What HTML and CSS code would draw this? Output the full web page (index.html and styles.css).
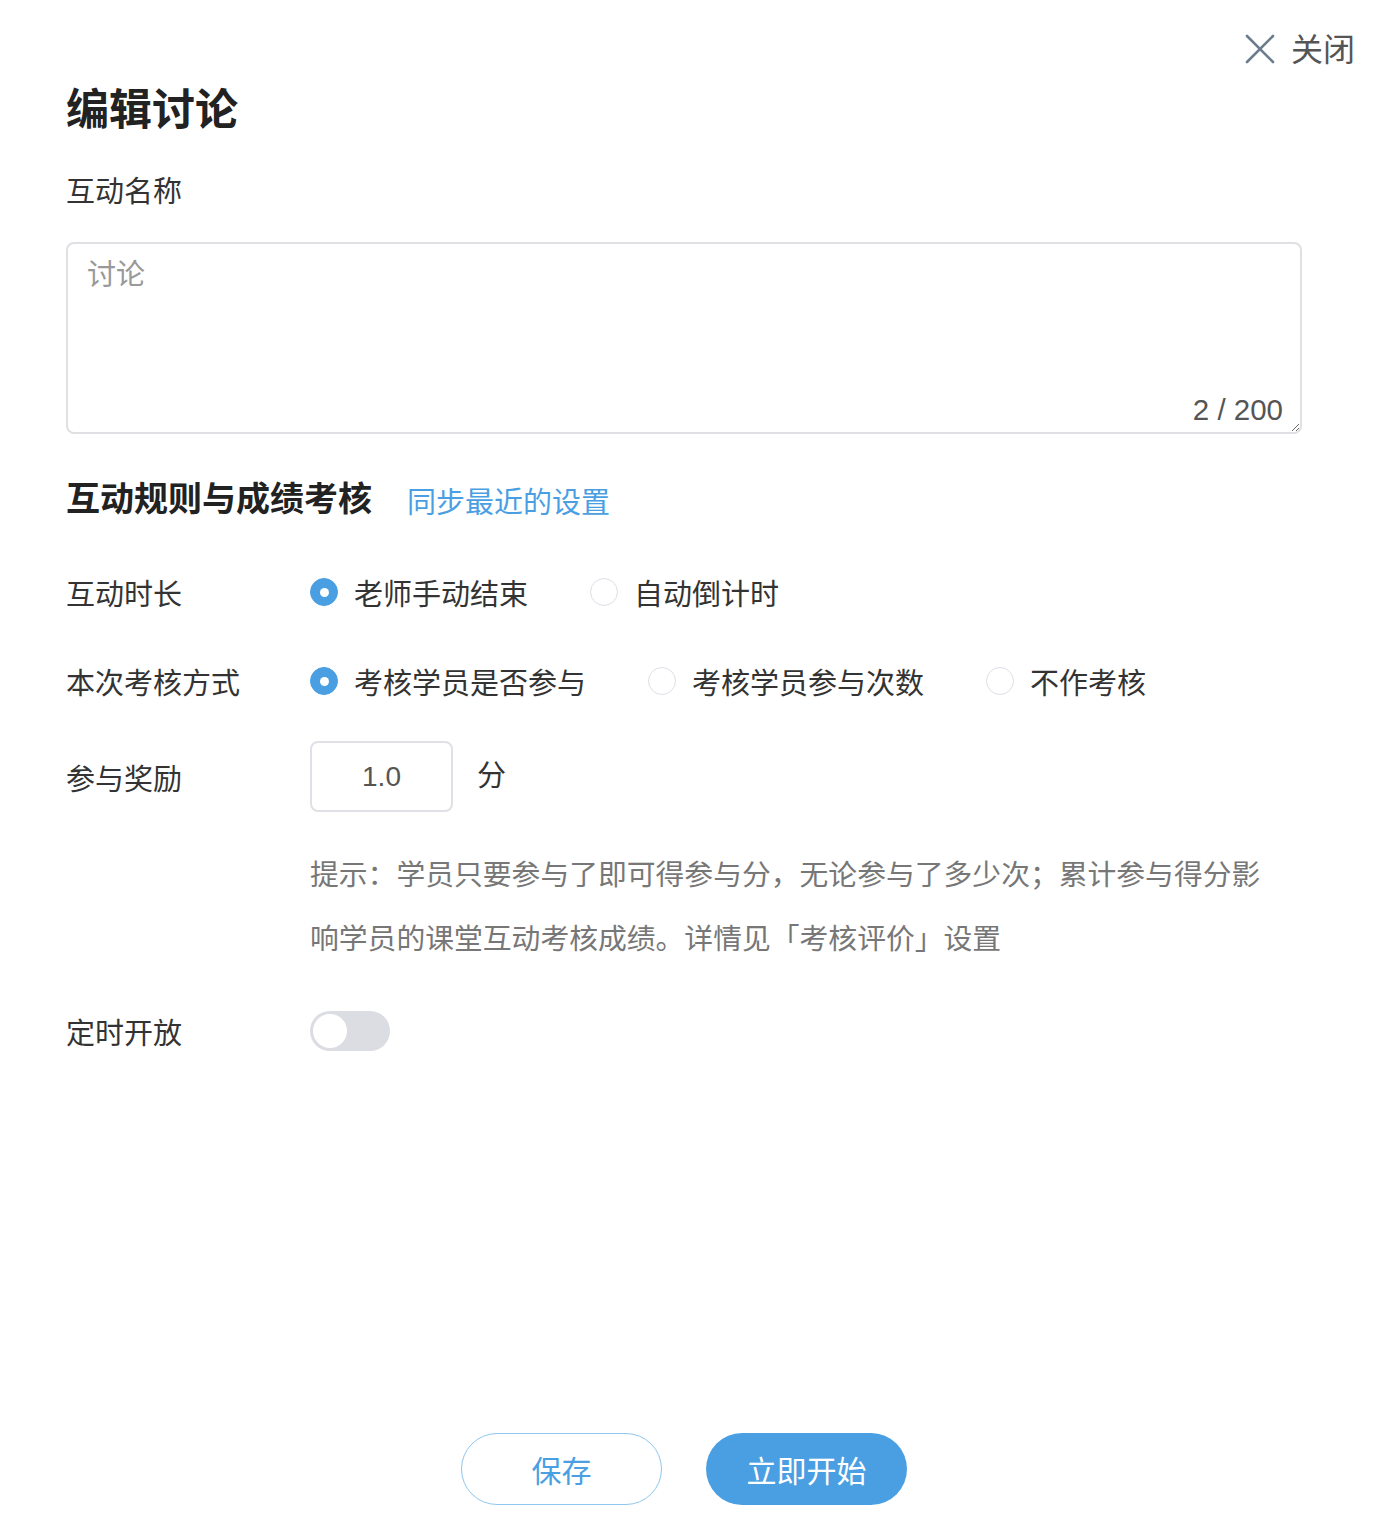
FILE: index.html
```html
<!DOCTYPE html>
<html lang="zh-CN">
<head>
    <meta charset="UTF-8">
    <meta name="viewport" content="width=device-width, initial-scale=1.0">
    <title>编辑讨论</title>
    <link rel="stylesheet" href="styles.css">
</head>
<body>

    <div class="dialog">
        <button class="close-btn" type="button">
            <svg class="close-icon" viewBox="0 0 30 30" width="30" height="30">
                <path d="M2 2 L28 28 M28 2 L2 28" stroke="#6b7c8c" stroke-width="2.6" fill="none" stroke-linecap="round"/>
            </svg>
            <span>关闭</span>
        </button>

        <h1 class="dialog-title">编辑讨论</h1>

        <label class="field-label" for="name">互动名称</label>
        <div class="textarea-wrap">
            <textarea id="name" maxlength="200">讨论</textarea>
            <span class="counter">2 / 200</span>
        </div>

        <div class="section-head">
            <h2>互动规则与成绩考核</h2>
            <a href="#" class="sync-link">同步最近的设置</a>
        </div>

        <div class="form-row row-duration">
            <span class="row-label">互动时长</span>
            <div class="radio-group">
                <label class="radio checked"><span class="radio-dot"></span>老师手动结束</label>
                <label class="radio"><span class="radio-dot"></span>自动倒计时</label>
            </div>
        </div>

        <div class="form-row row-mode">
            <span class="row-label">本次考核方式</span>
            <div class="radio-group">
                <label class="radio checked"><span class="radio-dot"></span>考核学员是否参与</label>
                <label class="radio"><span class="radio-dot"></span>考核学员参与次数</label>
                <label class="radio"><span class="radio-dot"></span>不作考核</label>
            </div>
        </div>

        <div class="form-row row-reward">
            <span class="row-label">参与奖励</span>
            <input class="score-input" type="text" value="1.0">
            <span class="unit">分</span>
        </div>

        <p class="hint">提示：学员只要参与了即可得参与分，无论参与了多少次；累计参与得分影响学员的课堂互动考核成绩。详情见「考核评价」设置</p>

        <div class="form-row row-timer">
            <span class="row-label">定时开放</span>
            <span class="switch"><span class="switch-knob"></span></span>
        </div>

        <div class="dialog-footer">
            <button class="btn btn-outline" type="button">保存</button>
            <button class="btn btn-primary" type="button">立即开始</button>
        </div>
    </div>

</body>
</html>
```

FILE: styles.css
```css
/* Basic Reset */
* {
    margin: 0;
    padding: 0;
    box-sizing: border-box;
}

body, html {
    font-family: 'Liberation Sans', 'Noto Sans CJK SC', sans-serif;
    background-color: #fff;
    color: #333;
}

/* Dialog */
.dialog {
    position: relative;
    min-height: 1526px;
    padding: 80px 78px 21px 66px;
    display: flex;
    flex-direction: column;
}

.close-btn {
    position: absolute;
    top: 24px;
    right: 25px;
    display: flex;
    align-items: center;
    gap: 16px;
    background: none;
    border: none;
    font-family: inherit;
    font-size: 32px;
    color: #555;
    cursor: pointer;
}

.close-icon {
    margin-top: 3px;
}

.dialog-title {
    font-size: 43px;
    line-height: 60px;
    font-weight: bold;
    color: #222;
}

.field-label {
    margin-top: 32px;
    font-size: 29px;
    line-height: 40px;
    color: #333;
}

/* Textarea */
.textarea-wrap {
    position: relative;
    margin-top: 30px;
}

.textarea-wrap textarea {
    display: block;
    width: 100%;
    height: 192px;
    padding: 11px 19px;
    font-family: inherit;
    font-size: 29px;
    line-height: 40px;
    color: #999;
    border: 2px solid #e0e0e4;
    border-radius: 8px;
    outline: none;
}

.counter {
    position: absolute;
    right: 19px;
    bottom: 7px;
    font-size: 29.5px;
    color: #555;
}

/* Section heading */
.section-head {
    margin-top: 42px;
    display: flex;
    align-items: center;
    gap: 35px;
}

.section-head h2 {
    font-size: 34px;
    line-height: 47px;
    font-weight: bold;
    color: #222;
}

.sync-link {
    font-size: 29px;
    color: #4a9fe3;
    text-decoration: none;
}

/* Rows */
.form-row {
    display: flex;
    align-items: center;
    min-height: 70px;
}

.row-label {
    width: 244px;
    flex-shrink: 0;
    font-size: 29px;
    color: #333;
}

.row-duration {
    margin-top: 34px;
}

.row-mode {
    margin-top: 19px;
}

.row-reward {
    margin-top: 25px;
}

.row-timer {
    margin-top: 25px;
}

.radio-group {
    display: flex;
    align-items: center;
}

.radio {
    display: flex;
    align-items: center;
    gap: 16px;
    margin-right: 62px;
    font-size: 29px;
    color: #333;
    cursor: pointer;
}

.radio-dot {
    width: 28px;
    height: 28px;
    border-radius: 50%;
    border: 1px solid #dcdfe6;
    background-color: #fff;
    display: flex;
    align-items: center;
    justify-content: center;
}

.radio.checked .radio-dot {
    background-color: #4a9fe3;
    border-color: #4a9fe3;
}

.radio.checked .radio-dot::after {
    content: "";
    width: 9px;
    height: 9px;
    border-radius: 50%;
    background-color: #fff;
}

.score-input {
    width: 143px;
    height: 71px;
    border: 2px solid #e0e0e6;
    border-radius: 8px;
    text-align: center;
    font-family: inherit;
    font-size: 28px;
    color: #555;
    outline: none;
}

.unit {
    margin-left: 24px;
    margin-bottom: 8px;
    font-size: 29px;
    color: #333;
}

.hint {
    margin-top: 31px;
    padding-left: 244px;
    padding-right: 30px;
    font-size: 28.8px;
    line-height: 64px;
    color: #777;
}

/* Switch */
.switch {
    width: 80px;
    height: 40px;
    border-radius: 20px;
    background-color: #dcdde3;
    padding: 3px;
    display: flex;
}

.switch-knob {
    width: 34px;
    height: 34px;
    border-radius: 50%;
    background-color: #fff;
}

/* Footer buttons */
.dialog-footer {
    margin-top: auto;
    display: flex;
    justify-content: center;
    gap: 44px;
}

.btn {
    width: 201px;
    height: 72px;
    border-radius: 36px;
    font-family: inherit;
    font-size: 30px;
    cursor: pointer;
}

.btn-outline {
    background-color: #fff;
    border: 1px solid #8ec8f0;
    color: #4a9fe3;
}

.btn-primary {
    background-color: #4a9fe3;
    border: none;
    color: #fff;
}
```
